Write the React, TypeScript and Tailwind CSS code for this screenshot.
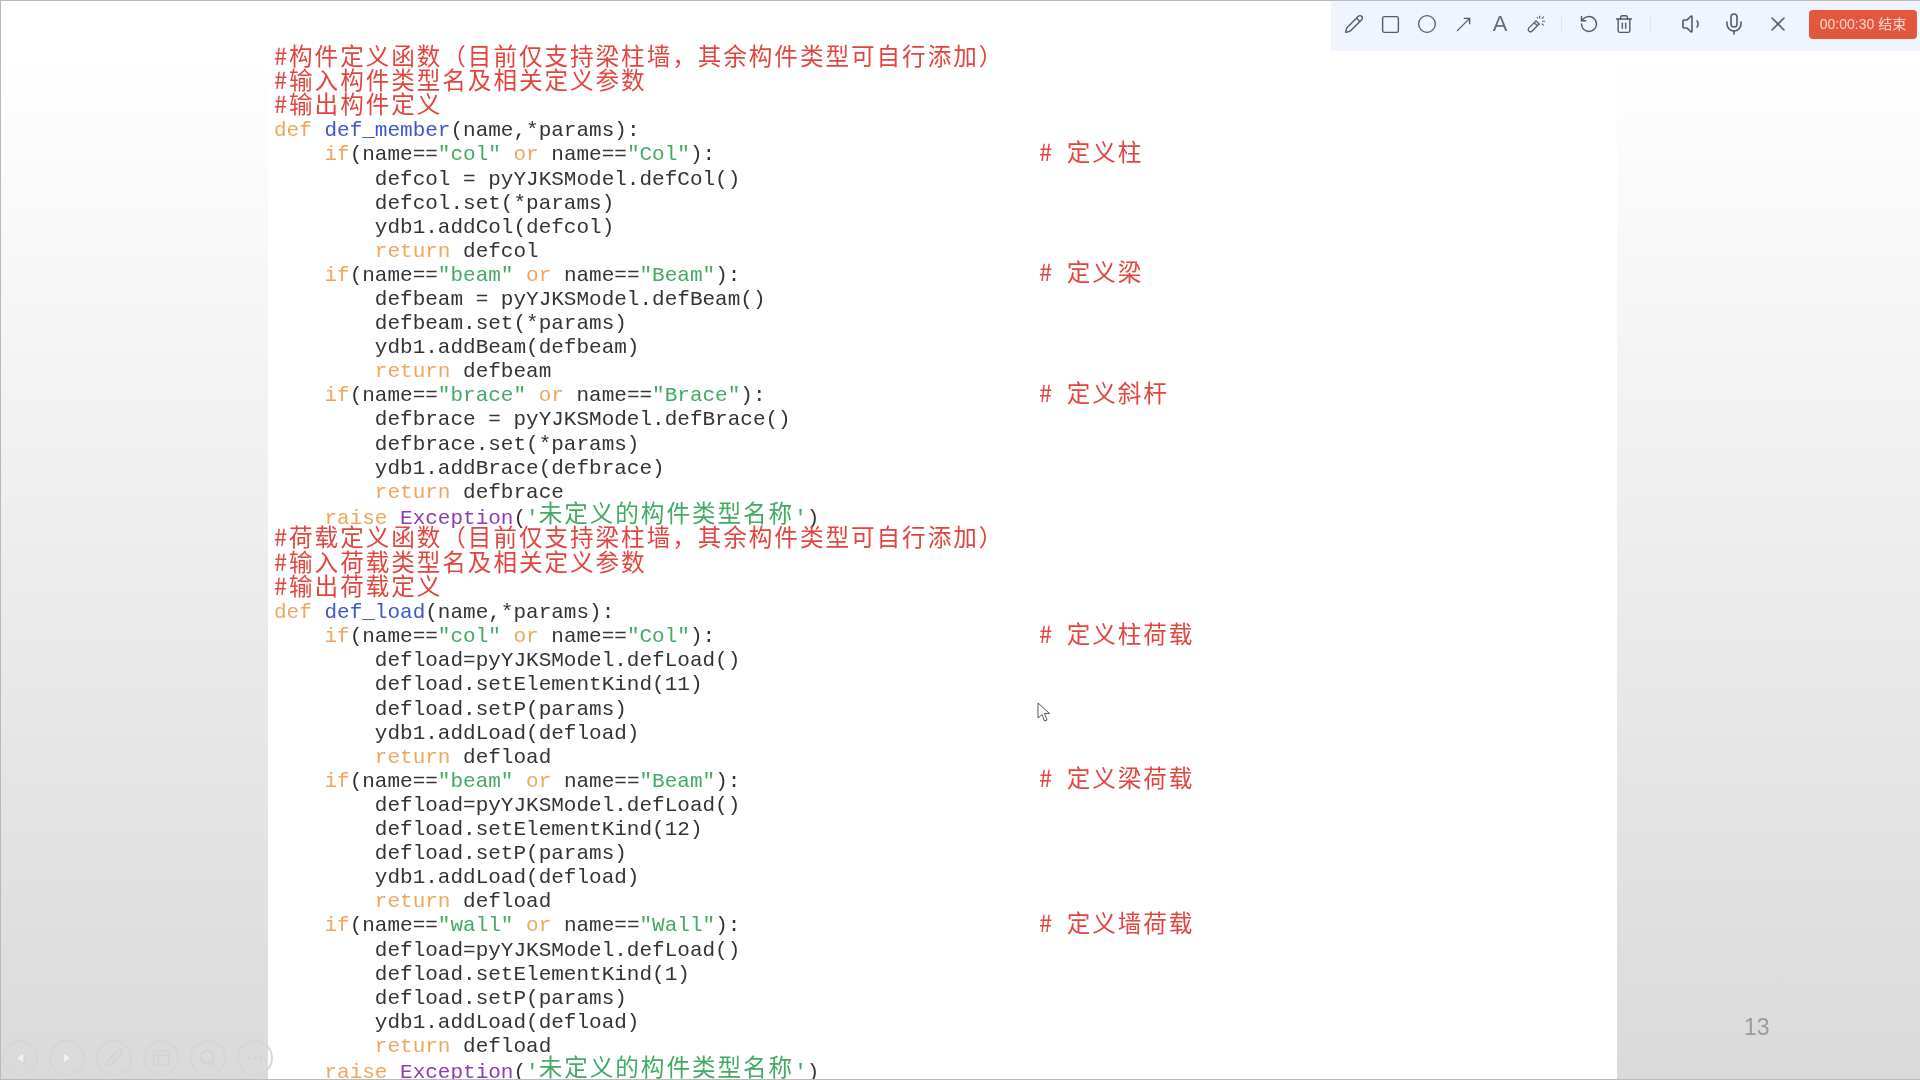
import React from "react";
import { Pencil, Square, Circle, MoveUpRight, RotateCcw, Trash2, Volume1, Mic, X, Pen, Table2, Search, Ellipsis } from "lucide-react";

const R = "text-[#e2453f]", O = "text-[#f0a65c]", B = "text-[#3f55c8]", G = "text-[#42aa62]", P = "text-[#8e3bb5]", K = "text-[#333333]";

type Seg = [string, string];
type Line = { indent: number; segs: Seg[]; note?: string };

const Cjk = /([#\u3000-\u303f\u4e00-\u9fff\uff00-\uffef]+)/;

function Txt({ t }: { t: string }) {
  return (
    <>
      {t.split(Cjk).map((p, i) =>
        i % 2 === 1 ? (
          <span key={i} className="inline-block -translate-y-[2px] text-[23.6px] tracking-[1.95px] font-['Noto_Sans_CJK_SC',sans-serif] [text-spacing-trim:space-all]">{p}</span>
        ) : (
          <span key={i}>{p}</span>
        )
      )}
    </>
  );
}

const comment = (t: string): Line => ({ indent: 0, segs: [[R, t]] });
const body = (t: string): Line => ({ indent: 8, segs: [[K, t]] });
const ret = (v: string): Line => ({ indent: 8, segs: [[O, "return"], [K, " " + v]] });
const cond = (a: string, b: string, note: string): Line => ({
  indent: 4,
  segs: [[O, "if"], [K, "(name=="], [G, `"${a}"`], [O, " or"], [K, " name=="], [G, `"${b}"`], [K, "):"]],
  note,
});
const raise: Line = { indent: 4, segs: [[O, "raise"], [K, " "], [P, "Exception"], [K, "("], [G, "'未定义的构件类型名称'"], [K, ")"]] };
const def = (n: string): Line => ({ indent: 0, segs: [[O, "def"], [K, " "], [B, n], [K, "(name,*params):"]] });

const lines: Line[] = [
  comment("#构件定义函数（目前仅支持梁柱墙，其余构件类型可自行添加）"),
  comment("#输入构件类型名及相关定义参数"),
  comment("#输出构件定义"),
  def("def_member"),
  cond("col", "Col", "定义柱"),
  body("defcol = pyYJKSModel.defCol()"),
  body("defcol.set(*params)"),
  body("ydb1.addCol(defcol)"),
  ret("defcol"),
  cond("beam", "Beam", "定义梁"),
  body("defbeam = pyYJKSModel.defBeam()"),
  body("defbeam.set(*params)"),
  body("ydb1.addBeam(defbeam)"),
  ret("defbeam"),
  cond("brace", "Brace", "定义斜杆"),
  body("defbrace = pyYJKSModel.defBrace()"),
  body("defbrace.set(*params)"),
  body("ydb1.addBrace(defbrace)"),
  ret("defbrace"),
  raise,
  comment("#荷载定义函数（目前仅支持梁柱墙，其余构件类型可自行添加）"),
  comment("#输入荷载类型名及相关定义参数"),
  comment("#输出荷载定义"),
  def("def_load"),
  cond("col", "Col", "定义柱荷载"),
  body("defload=pyYJKSModel.defLoad()"),
  body("defload.setElementKind(11)"),
  body("defload.setP(params)"),
  body("ydb1.addLoad(defload)"),
  ret("defload"),
  cond("beam", "Beam", "定义梁荷载"),
  body("defload=pyYJKSModel.defLoad()"),
  body("defload.setElementKind(12)"),
  body("defload.setP(params)"),
  body("ydb1.addLoad(defload)"),
  ret("defload"),
  cond("wall", "Wall", "定义墙荷载"),
  body("defload=pyYJKSModel.defLoad()"),
  body("defload.setElementKind(1)"),
  body("defload.setP(params)"),
  body("ydb1.addLoad(defload)"),
  ret("defload"),
  raise,
];

function CodeLine({ line }: { line: Line }) {
  return (
    <div className="flex h-[24.1px] items-center whitespace-pre leading-[24px]">
      <div className="w-[765px] shrink-0">
        {" ".repeat(line.indent)}
        {line.segs.map(([c, t], i) => (
          <span key={i} className={c}>
            <Txt t={t} />
          </span>
        ))}
      </div>
      {line.note && (
        <div className={R}>
          <Txt t={"# " + line.note} />
        </div>
      )}
    </div>
  );
}

const ico = "shrink-0 text-[#555b66]";

function Wand() {
  return (
    <svg width="20" height="22" viewBox="0 0 22 22" fill="none" stroke="#555b66" strokeWidth="1.4" className="shrink-0">
      <path d="M3 15.5 L11 7.5 L14.5 11 L6.5 19 Q5.5 20 4.2 19.6 L2.6 18 Q2.2 16.4 3 15.5 Z" />
      <path d="M9 9.5 L12.5 13" />
      <path d="M15 2 V5 M19.5 3 L17.5 5 M21 8 H18 M19.5 12.5 L17.5 10.5 M12 3.5 L13 5" strokeWidth="1.2" />
    </svg>
  );
}

function Toolbar() {
  return (
    <div className="absolute right-0 top-0 flex h-[50px] w-[589px] items-center bg-[#f0f4fd] pb-[4px] pl-[13px] blur-[0.4px]">
      <div className="flex items-center gap-[16px]">
        <Pencil size={20} strokeWidth={1.7} className={ico} />
        <Square size={21} strokeWidth={1.6} className={ico} />
        <Circle size={20} strokeWidth={1.6} className={ico} />
        <MoveUpRight size={21} strokeWidth={1.6} className={ico} />
        <span className="w-[20px] text-center font-['Liberation_Sans',sans-serif] text-[22px] leading-none text-[#666c77]">A</span>
        <Wand />
      </div>
      <div className="ml-[15px] h-[18px] w-px bg-[#e0e4ec]" />
      <div className="ml-[17px] flex items-center gap-[15px]">
        <RotateCcw size={20} strokeWidth={1.7} className={ico} />
        <Trash2 size={20} strokeWidth={1.7} className={ico} />
      </div>
      <div className="ml-[16px] h-[18px] w-px bg-[#e0e4ec]" />
      <div className="ml-[30px] flex items-center">
        <Volume1 size={24} strokeWidth={1.6} className={ico} />
        <Mic size={24} strokeWidth={1.6} className={`${ico} ml-[17px]`} />
        <X size={24} strokeWidth={1.6} className={`${ico} ml-[20px]`} />
      </div>
      <div className="ml-[19px] flex h-[29px] w-[108px] shrink-0 items-center justify-center rounded-[4px] bg-[#e4573f] font-['Liberation_Sans','Noto_Sans_CJK_SC',sans-serif] text-[14px] text-[#fbd6c8]">
        00:00:30 结束
      </div>
    </div>
  );
}

function NavButton({ children }: { children: React.ReactNode }) {
  return (
    <div className="flex h-[36px] w-[36px] items-center justify-center rounded-full border-2 border-[#d6d6d6] text-[#d2d2d2]">
      {children}
    </div>
  );
}

function Nav() {
  return (
    <div className="absolute bottom-[3px] left-[1px] flex gap-[11px] blur-[0.6px]">
      <NavButton>
        <svg width="14" height="16" viewBox="0 0 14 16"><path d="M11 2 L3 8 L11 14 Z" fill="#f0f0f0" stroke="#d0d0d0" /></svg>
      </NavButton>
      <NavButton>
        <svg width="14" height="16" viewBox="0 0 14 16"><path d="M3 2 L11 8 L3 14 Z" fill="#f0f0f0" stroke="#d0d0d0" /></svg>
      </NavButton>
      <NavButton><Pen size={20} /></NavButton>
      <NavButton><Table2 size={20} /></NavButton>
      <NavButton><Search size={20} /></NavButton>
      <NavButton><Ellipsis size={20} /></NavButton>
    </div>
  );
}

export default function App() {
  return (
    <div className="relative h-[1080px] w-[1920px] overflow-hidden border-b border-l border-t border-[#b9b9b9] bg-linear-to-b from-white from-5% to-[#dadada]">
      <div className="ml-[267px] h-full w-[1349px] bg-white pl-[6px] pt-[46px] font-['Liberation_Mono',monospace] text-[21px] blur-[0.5px]">
        {lines.map((l, i) => (
          <CodeLine key={i} line={l} />
        ))}
      </div>
      <Toolbar />
      <Nav />
      <div className="absolute left-[1743px] top-[1012px] font-['Liberation_Sans',sans-serif] text-[23px] leading-[28px] text-[#9a9a9a] blur-[0.4px]">13</div>
      <svg className="absolute left-[1036px] top-[701px]" width="15" height="22" viewBox="0 0 15 22">
        <path d="M1 1 L1 16 L5 12.5 L7.5 19 L10 18 L7.5 11.5 L12.5 11.5 Z" fill="#fff" stroke="#555" strokeWidth="1" />
      </svg>
    </div>
  );
}
